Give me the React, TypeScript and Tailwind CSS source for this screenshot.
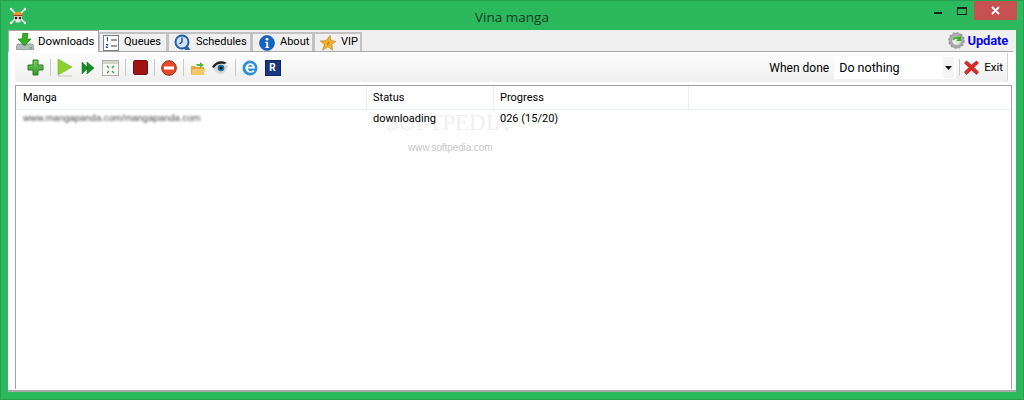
import type { ReactNode } from "react";

const FONT = "font-['Roboto','Liberation_Sans',Arial,sans-serif]";

function Skull() {
  return (
    <svg width="18" height="18" viewBox="0 0 18 18">
      <path d="M2 2l14 14M16 2L2 16" stroke="#f4f4f4" strokeWidth="1.600" />
      <circle cx="2" cy="2" r="1.200" fill="#fff" />
      <circle cx="16" cy="2" r="1.200" fill="#fff" />
      <circle cx="2" cy="16" r="1.200" fill="#fff" />
      <circle cx="16" cy="16" r="1.200" fill="#fff" />
      <path d="M5 9.500c0-4 8-4 8 0v3l-1.500 1v2h-5v-2L5 12.500z" fill="#e4e4e4" />
      <path d="M3 8.500c2-1 3-4 6-4s4 3 6 4c-3 1-9 1-12 0z" fill="#e8952c" />
      <path d="M4.500 8.500h9" stroke="#a33" strokeWidth="1" />
      <circle cx="7" cy="11" r="1.300" fill="#222" />
      <circle cx="11" cy="11" r="1.300" fill="#222" />
    </svg>
  );
}

function DownloadIcon() {
  return (
    <svg width="18" height="17" viewBox="0 0 18 17">
      <path d="M1.500 11h15l1.500 3v3H0v-3z" fill="#b4bbbe" stroke="#70787c" strokeWidth=".6" />
      <path d="M7 0h5l-1 6h4l-6.500 7L2 6h4z" fill="#35b020" stroke="#1a7414" strokeWidth=".7" />
      <circle cx="15" cy="15" r="1" fill="#30d030" />
    </svg>
  );
}

function ListIcon() {
  return (
    <svg width="16" height="16" viewBox="0 0 16 16">
      <rect x=".5" y=".5" width="15" height="15" fill="#fff" stroke="#6f7f9c" />
      <path d="M3.500 3l1-.7v4M3 9.500h2L3 12.500h2.200" stroke="#2452c4" strokeWidth="1" fill="none" />
      <path d="M8 5h6M8 11h6" stroke="#333" strokeWidth="1.200" />
    </svg>
  );
}

function ClockIcon() {
  return (
    <svg width="17" height="17" viewBox="0 0 17 17">
      <circle cx="8" cy="8" r="7.500" fill="#2a5fa8" />
      <circle cx="8" cy="8" r="5.500" fill="#cfe3f6" />
      <path d="M8 3.500V8l-2.500 2" stroke="#17407c" strokeWidth="1.300" fill="none" />
      <path d="M13 11l3.500 5h-6z" fill="#2a5fa8" />
    </svg>
  );
}

function InfoIcon() {
  return (
    <svg width="16" height="16" viewBox="0 0 16 16">
      <circle cx="8" cy="8" r="7.500" fill="#1463c4" stroke="#0d4a99" strokeWidth=".6" />
      <circle cx="8" cy="4.200" r="1.400" fill="#fff" />
      <path d="M6.300 6.800h2.800v5h1v1.200H6.300v-1.200h1v-3.800h-1z" fill="#fff" />
    </svg>
  );
}

function StarIcon() {
  return (
    <svg width="16" height="16" viewBox="0 0 16 16">
      <path d="M10 .5l1 5 4.800 1-4 2.800.8 5.700-4.600-3.200L2.500 15l2-5.300L.3 6l5.700-.3z" fill="#f0b42c" stroke="#b4761c" strokeWidth=".6" />
      <path d="M8 6l2 2-3 3z" fill="#e07a1c" />
    </svg>
  );
}

function GearIcon() {
  return (
    <svg width="17" height="17" viewBox="0 0 17 17">
      <circle cx="8.500" cy="8.500" r="6" fill="none" stroke="#a9a9a9" strokeWidth="3.500" />
      <circle cx="8.500" cy="8.500" r="7.600" fill="none" stroke="#999" strokeWidth="1.600" strokeDasharray="2 1.980" />
      <path d="M4.500 7.500c1-3 4.500-3.500 7-2.500L13 3.500V9H8l1.800-1.800C8 6.200 6.500 6.500 5.800 8.500z" fill="#3fae2c" />
      <path d="M8 9h5c-.3 2.500-2 4-4 4z" fill="#cfe8c8" />
    </svg>
  );
}

function ActiveTab({ icon, label }: { icon: ReactNode; label: string }) {
  return (
    <div className="w-[91px] h-[22px] bg-white border border-b-0 border-[#a8a8a8] flex items-center pl-[7px] gap-[4px] z-10">
      {icon}
      <span className="text-[11.500px] tracking-[-0.1px] text-black">{label}</span>
    </div>
  );
}

function Tab({ icon, label, className }: { icon: ReactNode; label: string; className: string }) {
  return (
    <div className={`${className} h-[19px] -ml-[1px] bg-[#f0f0f0] border-2 border-b-0 border-[#c2c2c2] flex items-center gap-[5px]`}>
      {icon}
      <span className="text-[11px] text-black">{label}</span>
    </div>
  );
}

function Tool({ children }: { children: ReactNode }) {
  return <div className="w-[23px] h-[24px] flex items-center justify-center shrink-0">{children}</div>;
}

function Sep({ className = "w-[7px]" }: { className?: string }) {
  return (
    <div className={`${className} flex justify-center shrink-0`}>
      <div className="w-px h-[17px] bg-[#c8c8c8]" />
    </div>
  );
}

function Toolbar() {
  return (
    <div className="mt-[1px] ml-[7px] w-[993px] h-[29px] pl-[9px] pr-[4px] flex items-center bg-gradient-to-b from-[#fdfdfd] to-[#efefef] rounded-b-[3px] border-r border-[#d4d4d4]">
      <Tool>
        <svg width="17" height="17" viewBox="0 0 17 17">
          <defs>
            <linearGradient id="plus" x1="0" y1="0" x2="0" y2="1">
              <stop offset="0" stopColor="#7fd060" />
              <stop offset="1" stopColor="#2f9a2a" />
            </linearGradient>
          </defs>
          <path d="M6 1h5v5h5v5h-5v5H6v-5H1V6h5z" fill="url(#plus)" stroke="#2a7d24" />
        </svg>
      </Tool>
      <Sep className="w-[6px]" />
      <Tool>
        <svg width="16" height="19" viewBox="0 0 16 19">
          <path d="M1 1l14 8-14 8z" fill="#8ccf2e" stroke="#74b626" strokeWidth=".6" />
          <path d="M1 18h14" stroke="#c4c4b4" />
        </svg>
      </Tool>
      <Tool>
        <svg width="14" height="14" viewBox="0 0 14 14">
          <path d="M1 1l6 6-6 6zM6 1l7 6-7 6z" fill="#168c22" stroke="#0e6e18" strokeWidth=".5" />
        </svg>
      </Tool>
      <Tool>
        <svg width="17" height="16" viewBox="0 0 17 16">
          <rect x=".5" y=".5" width="16" height="15" fill="#fbfbf5" stroke="#b0b0a8" />
          <rect x="1" y="1" width="15" height="3" fill="#d4d4cc" />
          <path d="M5 6l2 2M12 6l-2 2M5 13l2-2M12 13l-2-2" stroke="#2b9c3a" strokeWidth="1.300" />
        </svg>
      </Tool>
      <Sep />
      <Tool>
        <div className="w-[15px] h-[15px] rounded-[2px] bg-[#a01414] border border-[#7c1010]" />
      </Tool>
      <Sep className="w-[5px]" />
      <Tool>
        <svg width="16" height="16" viewBox="0 0 16 16">
          <circle cx="8" cy="8" r="7.300" fill="#e8482c" stroke="#8c2a10" strokeWidth="1" />
          <rect x="3" y="6.500" width="10" height="3" fill="#fff" />
        </svg>
      </Tool>
      <Sep className="w-[6px]" />
      <Tool>
        <svg width="16" height="16" viewBox="0 0 16 16">
          <path d="M1 6h4l1 1h8v8H1z" fill="#e0a83c" />
          <path d="M2.500 9h13l-2 6H1z" fill="#f4c868" />
          <path d="M6 4h4V2l4 3-4 3V6H7z" fill="#58b838" />
        </svg>
      </Tool>
      <Tool>
        <svg width="17" height="15" viewBox="0 0 17 15">
          <path d="M1 8c3-5 10-6 15-2-1 5-4 8-8 8-3 0-5-3-7-6z" fill="#d8d8d8" />
          <path d="M0 7c3-6 10-7 15-4l-3 1C8 3 4 4 2 8z" fill="#222" />
          <circle cx="9" cy="8" r="3.300" fill="#1c6f94" />
          <circle cx="9" cy="8" r="1.500" fill="#0c1c28" />
        </svg>
      </Tool>
      <Sep className="w-[6px]" />
      <Tool>
        <svg width="16" height="16" viewBox="0 0 16 16">
          <circle cx="8" cy="8" r="7.500" fill="#2f8fd8" />
          <path d="M12.500 11c-1.200 2-7 3-8.800-1.500C2.500 5.500 6 3 8.500 3.200c2.500.2 4.500 2 4.500 5.300H6c.2 3.500 4 3.500 5 1.500zM6 6.800h4.500C10.300 4.500 6.500 4.500 6 6.800z" fill="#fff" fillRule="evenodd" />
        </svg>
      </Tool>
      <Tool>
        <div className="w-[16px] h-[16px] bg-[#17387f] border border-[#0e2660] text-white text-[10px] font-bold flex items-center justify-center leading-none">
          R
        </div>
      </Tool>

      <span className="ml-auto text-[12px] text-black mr-[5px] pt-[1px]">When done</span>
      <div className="w-[122px] h-[23px] bg-white flex items-center justify-between pl-[5px] pr-[2px] text-[12.500px] text-black">
        <span className="pt-[1px]">Do nothing</span>
        <div className="w-[11px] h-[21px] bg-[#f4f4f4] flex items-center justify-center">
          <svg width="7" height="4" viewBox="0 0 7 4">
            <path d="M0 0h7L3.500 4z" fill="#111" />
          </svg>
        </div>
      </div>
      <Sep />
      <svg width="15" height="15" viewBox="0 0 15 15" className="ml-[1px] mr-[5px]">
        <path d="M2.500 1L7.500 5l5-4 2 2-4.500 4.500L14.500 12l-2 2.500-5-4.500-5 4.500-2-2.500L5 7.500.5 3z" fill="#e02a2a" stroke="#9c1c1c" strokeWidth=".7" />
      </svg>
      <span className="text-[11.500px] text-black">Exit</span>
    </div>
  );
}

function JobList() {
  return (
    <div className="relative mt-[3px] ml-[7px] w-[997px] h-[304px] border border-b-0 border-[#a0a0a8] bg-white text-[11px] text-black overflow-hidden">
      {/* watermark sits behind the rows */}
      <div className="absolute left-[370px] top-[25px] text-[23px] leading-none text-[#efefef] font-['Liberation_Serif',serif] pointer-events-none">
        SOFTPEDIA
      </div>
      <div className="absolute left-[392px] top-[54px] text-[10px] tracking-[-0.1px] text-[#c8c8c8] font-['Liberation_Sans',sans-serif] pointer-events-none">
        www.softpedia.com
      </div>

      <div className="relative flex h-[24px] border-b border-[#e6eef7]">
        <div className="w-[351px] border-r border-[#e6eef7] pl-[7px] pt-[2px] flex items-center">Manga</div>
        <div className="w-[127px] border-r border-[#e6eef7] pl-[6px] pt-[2px] flex items-center">Status</div>
        <div className="w-[195px] border-r border-[#e6eef7] pl-[6px] pt-[2px] flex items-center">Progress</div>
      </div>
      <div className="relative flex h-[18px]">
        <div className="w-[351px] pl-[7px] pb-[1px] flex items-center">
          <span className="text-[9.500px] text-[#444] blur-[1.200px] whitespace-nowrap font-['Liberation_Sans',sans-serif]">
            www.mangapanda.com/mangapanda.com
          </span>
        </div>
        <div className="w-[127px] pl-[6px] flex items-center">downloading</div>
        <div className="w-[195px] pl-[6px] flex items-center">026 (15/20)</div>
      </div>
    </div>
  );
}

export default function App() {
  return (
    <div className={`w-[1024px] h-[400px] bg-[#2cb85c] border border-[#25a04f] flex flex-col overflow-hidden ${FONT}`}>
      {/* title bar */}
      <div className="h-[29px] flex items-start shrink-0">
        <div className="w-[100px] pl-[8px] pt-[6px]">
          <Skull />
        </div>
        <div className="flex-1 text-center text-[13.500px] text-[#153d22] pt-[6px] font-['Open_Sans',sans-serif]">Vina manga</div>
        <div className="w-[100px] flex justify-end items-start pr-[6px]">
          <div className="w-[8px] h-[2px] bg-[#222] mt-[11px] mr-[15px]" />
          <div className="w-[10px] h-[8px] border border-t-2 border-[#222] mt-[6px] mr-[7px]" />
          <div className="w-[43px] h-[19px] bg-[#c75050] flex items-center justify-center">
            <svg width="9" height="9" viewBox="0 0 9 9">
              <path d="M1 1l7 7M8 1L1 8" stroke="#fff" strokeWidth="1.800" />
            </svg>
          </div>
        </div>
      </div>

      {/* client area */}
      <div className="mx-[7px] h-[362px] bg-white border-b-2 border-[#a8a8a8] flex flex-col">
        <div className="h-[22px] bg-[#f0f0f0] flex items-end relative shrink-0 pr-[3px]">
          <ActiveTab icon={<DownloadIcon />} label="Downloads" />
          <div className="flex items-end h-[22px] flex-1 border-b border-[#a8a8a8] pt-[2px]">
            <Tab className="w-[70px] pl-[3px]" icon={<ListIcon />} label="Queues" />
            <Tab className="w-[85px] pl-[5px]" icon={<ClockIcon />} label="Schedules" />
            <Tab className="w-[63px] pl-[6px]" icon={<InfoIcon />} label="About" />
            <Tab className="w-[49px] pl-[5px]" icon={<StarIcon />} label="VIP" />
            <div className="ml-auto flex items-center gap-[3px] pr-[5px] pb-[1px]">
              <GearIcon />
              <span className="text-[13px] font-bold text-[#0a0af0] tracking-[-0.2px]">Update</span>
            </div>
          </div>
        </div>
        <Toolbar />
        <JobList />
      </div>
    </div>
  );
}
